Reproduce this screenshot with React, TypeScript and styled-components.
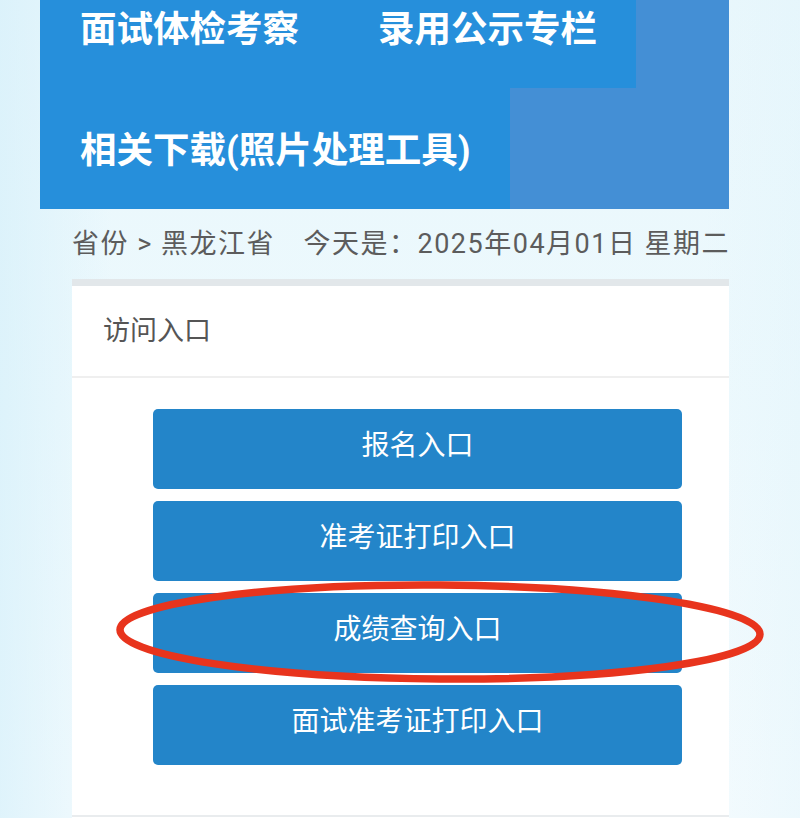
import React from "react";
import styled, { createGlobalStyle } from "styled-components";

const GlobalStyle = createGlobalStyle`
  html, body {
    margin: 0;
    padding: 0;
  }
  body {
    width: 800px;
    height: 818px;
    overflow: hidden;
    font-family: Roboto, "Noto Sans CJK SC", sans-serif;
    background:
      linear-gradient(90deg, rgba(214, 240, 250, 0.7) 0%, rgba(255, 255, 255, 0) 14%, rgba(255, 255, 255, 0) 88%, rgba(225, 244, 251, 0.4) 100%),
      linear-gradient(180deg, #e9f7fc 0%, #edf9fd 50%, #f4fbfe 100%);
  }
`;

const Page = styled.div`
  width: 800px;
  height: 818px;
  overflow: hidden;
  display: flex;
  flex-direction: column;
`;

const Nav = styled.nav`
  margin: -33px 71px 0 40px;
  background: #448fd5;
  display: flex;
  flex-wrap: wrap;
`;

const NavItem = styled.a`
  display: block;
  box-sizing: border-box;
  height: 121px;
  line-height: 117px;
  padding: 4px 39px 0 40px;
  background: #268fdb;
  color: #ffffff;
  font-size: 36.5px;
  font-weight: 700;
  white-space: nowrap;
  text-decoration: none;
`;

const Crumb = styled.div`
  height: 70px;
  line-height: 70px;
  margin-left: 72px;
  font-size: 27px;
  letter-spacing: 1.5px;
  color: #5c5c5c;
  white-space: nowrap;
`;

const Card = styled.section`
  margin: 0 71px 0 72px;
  background: #ffffff;
  border-top: 7px solid #e2e7ea;
  flex: 1;
  display: flex;
  flex-direction: column;
`;

const CardTitle = styled.h2`
  margin: 0;
  height: 90px;
  line-height: 90px;
  padding-left: 31px;
  font-size: 27px;
  font-weight: 400;
  color: #555555;
  border-bottom: 2px solid #efefef;
`;

const EntryList = styled.div`
  display: flex;
  flex-direction: column;
  gap: 12px;
  padding: 31px 0 0 81px;
  height: 406px;
  border-bottom: 2px solid #e9ecee;
`;

const EntryButton = styled.a`
  position: relative;
  display: flex;
  align-items: center;
  justify-content: center;
  box-sizing: border-box;
  width: 529px;
  height: 80px;
  padding-bottom: 12px;
  border-radius: 5px;
  background: #2385c9;
  color: #ffffff;
  font-size: 28px;
  text-decoration: none;
  white-space: nowrap;
`;

const Ring = styled.svg`
  position: absolute;
  left: -37px;
  top: -13px;
  width: 648px;
  height: 104px;
  overflow: visible;
  pointer-events: none;
`;

const entries = ["报名入口", "准考证打印入口", "成绩查询入口", "面试准考证打印入口"];

export default function App() {
  return (
    <Page>
      <GlobalStyle />
      <Nav>
        <NavItem>面试体检考察</NavItem>
        <NavItem>录用公示专栏</NavItem>
        <NavItem>相关下载(照片处理工具)</NavItem>
      </Nav>
      <Crumb>省份 &gt; 黑龙江省　今天是：2025年04月01日 星期二</Crumb>
      <Card>
        <CardTitle>访问入口</CardTitle>
        <EntryList>
          {entries.map((label, i) => (
            <EntryButton key={label}>
              {label}
              {i === 2 && (
                <Ring viewBox="0 0 648 104">
                  <ellipse
                    cx="324"
                    cy="52"
                    rx="320"
                    ry="47"
                    fill="none"
                    stroke="#e8341d"
                    strokeWidth="7.5"
                    transform="rotate(0.4 324 52)"
                  />
                </Ring>
              )}
            </EntryButton>
          ))}
        </EntryList>
      </Card>
    </Page>
  );
}
